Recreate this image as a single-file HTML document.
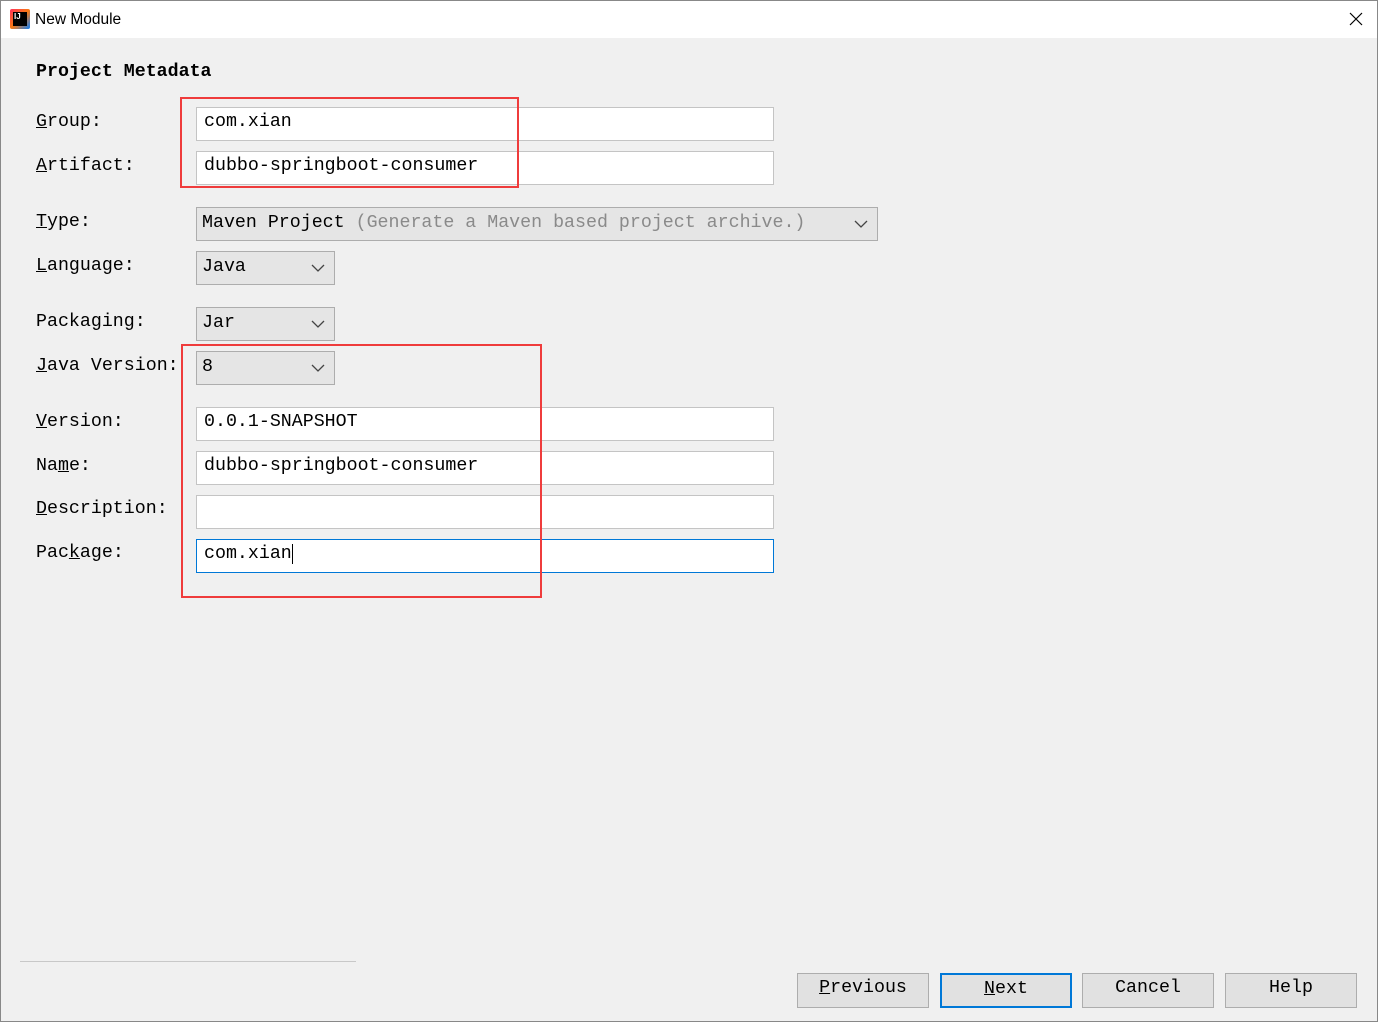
<!DOCTYPE html>
<html><head><meta charset="utf-8"><style>
*{margin:0;padding:0;box-sizing:border-box}
body{width:1378px;height:1022px;background:#f0f0f0;position:relative;overflow:hidden;font-family:"Liberation Mono",monospace;font-size:18.3px;color:#000}
.bord{position:absolute;left:0;top:0;width:1378px;height:1022px;border:1px solid #888;z-index:5;pointer-events:none}
.title{position:absolute;left:0;top:0;width:1378px;height:38px;background:#fff;font-family:"Liberation Sans",sans-serif;font-size:15.5px}
.a{position:absolute;white-space:pre}
.f{position:absolute;background:#fff;border:1px solid #c4c4c4;height:34px;padding-left:7px;line-height:28px}
.c{position:absolute;background:#e5e5e5;border:1px solid #adadad;height:34px;padding-left:5px;line-height:30px}
.c svg{position:absolute;right:9px;top:12px}
.r{position:absolute;border:2px solid #ef3c3c}
.b{position:absolute;top:973px;height:35px;width:132px;background:#e1e1e1;border:1px solid #adadad;text-align:center;line-height:28px}
u{text-decoration:underline}
</style></head><body>
<div class="bord"></div>
<div class="title">
<div class="a" style="left:10px;top:9px;width:20px;height:20px;background:linear-gradient(135deg,#fe315d,#f97a12 50%,#087cfa);border-radius:2px"></div>
<div class="a" style="left:13px;top:12px;width:14px;height:14px;background:#000;color:#fff;font-size:8px;font-weight:bold;line-height:9px;padding-left:1px">IJ</div>
<div class="a" style="left:35px;top:11px;color:#000">New Module</div>
<svg class="a" style="left:1349px;top:12px" width="14" height="14"><path d="M1 1L13 13M13 1L1 13" stroke="#000" stroke-width="1.2"/></svg>
</div>
<div class="a" style="left:36px;top:62px;font-weight:bold">Project Metadata</div>
<div class="a" style="left:36px;top:112px"><u>G</u>roup:</div>
<div class="a" style="left:36px;top:156px"><u>A</u>rtifact:</div>
<div class="a" style="left:36px;top:212px"><u>T</u>ype:</div>
<div class="a" style="left:36px;top:256px"><u>L</u>anguage:</div>
<div class="a" style="left:36px;top:312px">Packaging:</div>
<div class="a" style="left:36px;top:356px"><u>J</u>ava Version:</div>
<div class="a" style="left:36px;top:412px"><u>V</u>ersion:</div>
<div class="a" style="left:36px;top:456px">Na<u>m</u>e:</div>
<div class="a" style="left:36px;top:499px"><u>D</u>escription:</div>
<div class="a" style="left:36px;top:543px">Pac<u>k</u>age:</div>

<div class="f" style="left:196px;top:107px;width:578px">com.xian</div>
<div class="f" style="left:196px;top:151px;width:578px">dubbo-springboot-consumer</div>
<div class="c" style="left:196px;top:207px;width:682px">Maven Project <span style="color:#8a8a8a">(Generate a Maven based project archive.)</span><svg width="14" height="8"><path d="M1 1L7 7L13 1" fill="none" stroke="#444" stroke-width="1.3"/></svg></div>
<div class="c" style="left:196px;top:251px;width:139px">Java<svg width="14" height="8"><path d="M1 1L7 7L13 1" fill="none" stroke="#444" stroke-width="1.3"/></svg></div>
<div class="c" style="left:196px;top:307px;width:139px">Jar<svg width="14" height="8"><path d="M1 1L7 7L13 1" fill="none" stroke="#444" stroke-width="1.3"/></svg></div>
<div class="c" style="left:196px;top:351px;width:139px">8<svg width="14" height="8"><path d="M1 1L7 7L13 1" fill="none" stroke="#444" stroke-width="1.3"/></svg></div>
<div class="f" style="left:196px;top:407px;width:578px">0.0.1-SNAPSHOT</div>
<div class="f" style="left:196px;top:451px;width:578px">dubbo-springboot-consumer</div>
<div class="f" style="left:196px;top:495px;width:578px"></div>
<div class="f" style="left:196px;top:539px;width:578px;border-color:#0078d7">com.xian<span style="border-left:1px solid #000"></span></div>

<div class="r" style="left:180px;top:97px;width:339px;height:91px"></div>
<div class="r" style="left:181px;top:344px;width:361px;height:254px"></div>

<div class="a" style="left:20px;top:961px;width:336px;height:1px;background:#c8c8c8"></div>
<div class="b" style="left:797px"><u>P</u>revious</div>
<div class="b" style="left:940px;border:2px solid #0078d7"><u>N</u>ext</div>
<div class="b" style="left:1082px">Cancel</div>
<div class="b" style="left:1225px">Help</div>
</body></html>
